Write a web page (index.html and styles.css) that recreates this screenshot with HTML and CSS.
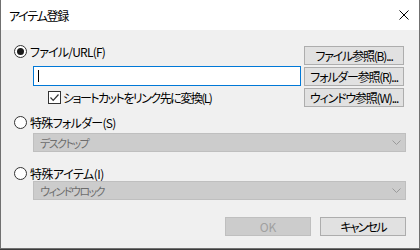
FILE: index.html
```html
<!DOCTYPE html>
<html lang="ja">
<head>
<meta charset="utf-8">
<title>アイテム登録</title>
<link rel="stylesheet" href="styles.css">
</head>
<body>
<div class="window">
  <div class="titlebar">
    <span class="title">アイテム登録</span>
    <svg class="close" width="10" height="10" viewBox="0 0 10 10"><path d="M0.5 0.5 L9.5 9.5 M9.5 0.5 L0.5 9.5" stroke="#000" stroke-width="1" fill="none"/></svg>
  </div>
  <div class="content">
    <div class="top">
      <div class="left">
        <div class="radio-row"><span class="radio checked"></span><span class="label l1">ファイル/URL(F)</span></div>
        <div class="input"><span class="caret"></span></div>
        <div class="check-row">
          <span class="checkbox"><svg width="11" height="11" viewBox="0 0 11 11"><path d="M1.5 5.5 L4.2 8.3 L9.5 2.5" stroke="#333" stroke-width="1.2" fill="none"/></svg></span>
          <span class="label l-check">ショートカットをリンク先に変換(L)</span>
        </div>
      </div>
      <div class="buttons">
        <div class="btn side">ファイル参照(B)...</div>
        <div class="btn side">フォルダー参照(R)...</div>
        <div class="btn side">ウィンドウ参照(W)...</div>
      </div>
    </div>
    <div class="radio-row r2"><span class="radio"></span><span class="label l2">特殊フォルダー(S)</span></div>
    <div class="combo c1"><span>デスクトップ</span><svg width="9" height="5" viewBox="0 0 9 5"><path d="M0.5 0.5 L4.5 4.5 L8.5 0.5" stroke="#9a9a9a" fill="none"/></svg></div>
    <div class="radio-row r3"><span class="radio"></span><span class="label l3">特殊アイテム(I)</span></div>
    <div class="combo c2"><span>ウィンドウロック</span><svg width="9" height="5" viewBox="0 0 9 5"><path d="M0.5 0.5 L4.5 4.5 L8.5 0.5" stroke="#9a9a9a" fill="none"/></svg></div>
    <div class="footer">
      <div class="btn foot disabled">OK</div>
      <div class="btn foot cancel">キャンセル</div>
    </div>
  </div>
</div>
</body>
</html>
```

FILE: styles.css
```css
html, body {
  margin: 0;
  padding: 0;
}
body {
  width: 420px;
  height: 250px;
  background: #3b3b3b;
  font-family: "Noto Sans CJK JP", "Noto Sans", sans-serif;
  font-size: 12px;
  font-feature-settings: "palt";
  color: #000;
  overflow: hidden;
  white-space: nowrap;
}
.window {
  box-sizing: border-box;
  width: 420px;
  height: 249px;
  background: #f0f0f0;
  border: 1px solid #707070;
  border-top: none;
  display: flex;
  flex-direction: column;
}
.titlebar {
  height: 30px;
  background: #fff;
  display: flex;
  align-items: center;
  padding-left: 8px;
  padding-right: 10px;
  flex-shrink: 0;
}
.title {
  flex: 1;
  line-height: 14px;
  margin-top: 2px;
  letter-spacing: -1.3px;
}
.close {
  display: block;
}
.content {
  padding: 14px 13px 0 13px;
  display: flex;
  flex-direction: column;
}
.top {
  display: flex;
}
.left {
  width: 287px;
  display: flex;
  flex-direction: column;
}
.radio-row {
  display: flex;
  align-items: center;
  height: 15px;
}
.radio {
  box-sizing: border-box;
  width: 13px;
  height: 13px;
  border: 1px solid #333;
  border-radius: 50%;
  background: #fff;
  position: relative;
  flex-shrink: 0;
}
.radio.checked::after {
  content: "";
  position: absolute;
  left: 2px;
  top: 2px;
  width: 7px;
  height: 7px;
  border-radius: 50%;
  background: #1a1a1a;
}
.radio-row .label {
  margin-left: 3px;
  line-height: 15px;
}
.l1 {
  letter-spacing: -0.8px;
}
.l2 {
  letter-spacing: -0.7px;
}
.l3 {
  letter-spacing: -0.5px;
}
.input {
  box-sizing: border-box;
  margin: 7px 0 0 19px;
  width: 268px;
  height: 20px;
  background: #fff;
  border: 1px solid #0078d7;
  display: flex;
  align-items: center;
  padding-left: 4px;
}
.caret {
  width: 1px;
  height: 12px;
  background: #000;
}
.check-row {
  margin: 5px 0 0 34px;
  display: flex;
  align-items: center;
  height: 13px;
}
.checkbox {
  box-sizing: border-box;
  width: 13px;
  height: 13px;
  border: 1px solid #333;
  background: #fff;
  display: flex;
  align-items: center;
  justify-content: center;
  flex-shrink: 0;
}
.checkbox svg {
  display: block;
}
.check-row .label {
  margin-left: 2px;
  line-height: 13px;
}
.l-check {
  letter-spacing: -1.5px;
}
.buttons {
  margin: 2px 0 0 3px;
  display: flex;
  flex-direction: column;
  gap: 2px;
}
.btn {
  box-sizing: border-box;
  background: #e1e1e1;
  border: 1px solid #adadad;
  display: flex;
  align-items: center;
  justify-content: center;
  line-height: 14px;
}
.btn.side {
  width: 100px;
  height: 19px;
  letter-spacing: -1.2px;
}
.r2 {
  margin-top: 8px;
}
.r3 {
  margin-top: 14px;
}
.combo {
  box-sizing: border-box;
  margin-left: 19px;
  width: 373px;
  height: 19px;
  background: #cccccc;
  border: 1px solid #bfbfbf;
  color: #6d6d6d;
  display: flex;
  align-items: center;
  justify-content: space-between;
  padding: 0 4px 0 6px;
  line-height: 14px;
  font-size: 11px;
  letter-spacing: -1.5px;
}
.combo svg {
  display: block;
}
.c1 {
  margin-top: 3px;
}
.c2 {
  margin-top: 0;
}
.footer {
  margin-top: 17px;
  display: flex;
  justify-content: flex-end;
  gap: 9px;
}
.btn.foot {
  width: 86px;
  height: 19px;
}
.btn.cancel {
  letter-spacing: -1.8px;
}
.btn.disabled {
  background: #cccccc;
  border-color: #bfbfbf;
  color: #a0a0a0;
}
```
